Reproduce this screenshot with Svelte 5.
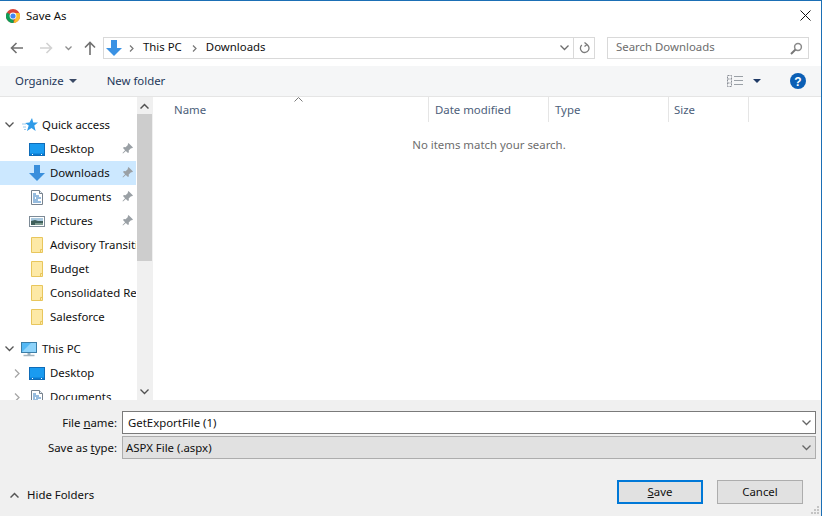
<script>
  const quick = [
    { name: 'Desktop', icon: 'desktop', pin: true },
    { name: 'Downloads', icon: 'down', pin: true, sel: true },
    { name: 'Documents', icon: 'doc', pin: true },
    { name: 'Pictures', icon: 'pic', pin: true },
    { name: 'Advisory Transitions', icon: 'folder' },
    { name: 'Budget', icon: 'folder' },
    { name: 'Consolidated Reports', icon: 'folder' },
    { name: 'Salesforce', icon: 'folder' }
  ];
  const pc = [
    { name: 'Desktop', icon: 'desktop' },
    { name: 'Documents', icon: 'doc' }
  ];
</script>

{#snippet icon(kind)}
  <span class="ibox">
  {#if kind === 'desktop'}
    <svg width="16" height="13" viewBox="0 0 16 13"><rect x="0.500" y="0.500" width="15" height="12" fill="#1a9bf0" stroke="#0f6cb8"/><path d="M1 10.500h14V12H1z" fill="#0a7ad0"/><path d="M3 11.500h1M12 11.500h1" stroke="#fff"/></svg>
  {:else if kind === 'down'}
    <svg width="16" height="16" viewBox="0 0 16 16"><path d="M5 0h6v8h5l-8 8-8-8h5z" fill="#3a8fdc"/></svg>
  {:else if kind === 'doc'}
    <svg width="12" height="15" viewBox="0 0 12 15"><path d="M0.500 0.500h8l3 3v11H.5z" fill="#fff" stroke="#77828e"/><path d="M8.500 0.500v3h3" fill="#e8eef4" stroke="#77828e"/><path d="M2 4h3M2 6h6M2 8h2M5 8h5M2 10h5M2 12h8" stroke="#2f78bd"/></svg>
  {:else if kind === 'pic'}
    <svg width="16" height="11" viewBox="0 0 16 11"><rect x="0.500" y="0.500" width="15" height="10" fill="#fff" stroke="#7d8a96"/><rect x="2" y="2" width="12" height="3" fill="#a9c8de"/><path d="M2 5l4-1 3 1 5 0v4H2z" fill="#3f5f5a"/><path d="M6 7h8v2H6z" fill="#7c9a8f"/></svg>
  {:else}
    <svg width="12" height="16" viewBox="0 0 12 16"><path d="M0.500 0.500h11v15H.5z" fill="#fde9a6" stroke="#e8c65c"/><path d="M9.500 15.500v-3h2" fill="none" stroke="#e8c65c"/></svg>
  {/if}
  </span>
{/snippet}

{#snippet pin()}
  <svg class="pin" width="11" height="11" viewBox="0 0 11 11"><path d="M6.500 0l4.500 4.500-1 .8-1-.1-2.300 2.300.2 1.700-.9.900-2.200-2.200L1 10.500 0.500 10l2.600-2.800L1 5l.9-.9 1.700.2L5.900 2 5.800 1z" fill="#9aa0a5"/></svg>
{/snippet}

{#snippet chevDown(color)}
  <svg width="9" height="6" viewBox="0 0 9 6"><path d="M0.500 0.500l4 4 4-4" fill="none" stroke={color} stroke-width="1.300"/></svg>
{/snippet}

<div class="win">
  <header class="title">
    <svg width="14" height="14" viewBox="0 0 14 14">
      <circle cx="7" cy="7" r="7" fill="#db4437"/>
      <path d="M7 7L7.800 14A7 7 0 0 1 0.900 3.600z" fill="#0f9d58"/>
      <path d="M7 4h6.400A7 7 0 0 1 7.500 14L10 8z" fill="#fbc02d"/>
      <circle cx="7" cy="7" r="3.400" fill="#fff"/>
      <circle cx="7" cy="7" r="2.600" fill="#4285f4"/>
    </svg>
    <span>Save As</span>
    <svg class="close" width="11" height="11" viewBox="0 0 11 11"><path d="M0.500 0.500l10 10M10.500 0.500l-10 10" stroke="#111" stroke-width="1"/></svg>
  </header>

  <nav class="nav">
    <svg class="nb" width="14" height="12" viewBox="0 0 14 12"><path d="M13 6H2M6.500 1L1.500 6l5 5" fill="none" stroke="#707070" stroke-width="1.600"/></svg>
    <svg class="nb fwd" width="14" height="12" viewBox="0 0 14 12"><path d="M1 6h11M7.500 1l5 5-5 5" fill="none" stroke="#d2d2d2" stroke-width="1.600"/></svg>
    <svg class="nb hist" width="7" height="5" viewBox="0 0 7 5"><path d="M0.500 0.500l3 3 3-3" fill="none" stroke="#8d8d8d" stroke-width="1.300"/></svg>
    <svg class="nb up" width="12" height="14" viewBox="0 0 12 14"><path d="M6 14V2M1 6.500l5-5 5 5" fill="none" stroke="#707070" stroke-width="1.600"/></svg>
    <div class="addr">
      <svg width="16" height="16" viewBox="0 0 16 16"><path d="M5 0h6v8h5l-8 8-8-8h5z" fill="#3a92e4"/></svg>
      <svg class="crumb first" width="5" height="7" viewBox="0 0 5 7"><path d="M1 0.500l3 3-3 3" fill="none" stroke="#777" stroke-width="1.200"/></svg>
      <span class="path">This PC</span>
      <svg class="crumb" width="5" height="7" viewBox="0 0 5 7"><path d="M1 0.500l3 3-3 3" fill="none" stroke="#777" stroke-width="1.200"/></svg>
      <span class="path">Downloads</span>
      <span class="drop">{@render chevDown('#6d6d6d')}</span>
      <span class="refresh">
        <svg width="11" height="12" viewBox="0 0 11 12"><path d="M7.500 2.300A4.300 4.300 0 1 1 2.800 3M5.500 0.500L8 2.500 5.500 4.500" fill="none" stroke="#7b7b7b" stroke-width="1.300"/></svg>
      </span>
    </div>
    <div class="search">
      <span class="stext">Search Downloads</span>
      <svg width="13" height="13" viewBox="0 0 13 13"><circle cx="8" cy="5" r="3.400" fill="none" stroke="#8a8a8a" stroke-width="1.500"/><path d="M5.500 7.500L1 12" stroke="#777" stroke-width="2"/></svg>
    </div>
  </nav>

  <div class="tools">
    <span class="org">Organize</span>
    <svg class="caret" width="8" height="4" viewBox="0 0 8 4"><path d="M0 0h8L4 4z" fill="#3b4a66"/></svg>
    <span class="newf">New folder</span>
    <svg class="views" width="16" height="12" viewBox="0 0 16 12"><path d="M0.500 0.500h4v11h-4zM0.500 4h4M0.500 8h4" fill="none" stroke="#8a8f96" stroke-dasharray="2 1"/><path d="M7 1.500h9M7 5.500h9M7 9.500h9" stroke="#9aa0a6"/></svg>
    <svg class="caret2" width="8" height="4" viewBox="0 0 8 4"><path d="M0 0h8L4 4z" fill="#1f3a66"/></svg>
    <svg class="help" width="16" height="16" viewBox="0 0 16 16"><circle cx="8" cy="8" r="8" fill="#0b5fb5"/><text x="8" y="12.500" text-anchor="middle" class="q">?</text></svg>
  </div>

  <main class="main">
    <aside class="tree">
      <div class="rows">
        <div class="row head">
          <span class="tw">{@render chevDown('#555')}</span>
          <svg class="star" width="16" height="14" viewBox="0 0 16 14"><path d="M10 0l1.300 4.500H16l-3.700 2.900 1.300 5.600-4.100-3L5 13l1.700-5.400L3 5l4.500-.4z" fill="#2f9be8"/><path d="M0 6h4M1 9h3M2 11.500h2" stroke="#9ccbee"/></svg>
          <span class="lbl">Quick access</span>
        </div>
        {#each quick as item}
          <div class="row item" class:sel={item.sel}>
            {@render icon(item.icon)}
            <span class="lbl">{item.name}</span>
            {#if item.pin}{@render pin()}{/if}
          </div>
        {/each}
        <div class="row head pcrow">
          <span class="tw">{@render chevDown('#555')}</span>
          <svg class="pcico" width="16" height="15" viewBox="0 0 16 15"><rect x="0.500" y="0.500" width="15" height="10" fill="#53b8f5" stroke="#3b7ea8"/><path d="M1 10l9-9h5v9z" fill="#8ed3fa"/><path d="M6.500 11h3v2h-3z" fill="#9bb0bd"/><path d="M2.500 13.500h11" stroke="#a6b5bf" stroke-width="1.500"/></svg>
          <span class="lbl">This PC</span>
        </div>
        {#each pc as item}
          <div class="row item sub">
            <svg class="tw2" width="6" height="9" viewBox="0 0 6 9"><path d="M1 0.500l4 4-4 4" fill="none" stroke="#a6a6a6" stroke-width="1.300"/></svg>
            {@render icon(item.icon)}
            <span class="lbl">{item.name}</span>
          </div>
        {/each}
      </div>
      <div class="sb">
        <div class="sbtn"><svg width="9" height="6" viewBox="0 0 9 6"><path d="M0.500 5.500l4-4 4 4" fill="none" stroke="#505050" stroke-width="1.500"/></svg></div>
        <div class="thumb"></div>
        <div class="track"></div>
        <div class="sbtn dn">{@render chevDown('#505050')}</div>
      </div>
    </aside>
    <section class="list">
      <div class="cols">
        <svg class="sort" width="9" height="5" viewBox="0 0 9 5"><path d="M0.500 4.500l4-4 4 4" fill="none" stroke="#7a7a7a"/></svg>
        <div class="col c1">Name</div>
        <div class="col c2">Date modified</div>
        <div class="col c3">Type</div>
        <div class="col c4">Size</div>
      </div>
      <p class="empty">No items match your search.</p>
    </section>
  </main>

  <footer class="foot">
    <div class="field name">
      <label for="fn">File <u>n</u>ame:</label>
      <div class="inp"><input id="fn" value="GetExportFile (1)" />{@render chevDown('#666')}</div>
    </div>
    <div class="field type">
      <span class="flabel">Save as <u>t</u>ype:</span>
      <div class="inp ro"><span>ASPX File (.aspx)</span>{@render chevDown('#666')}</div>
    </div>
    <div class="actions">
      <div class="hide">
        <svg width="9" height="6" viewBox="0 0 9 6"><path d="M0.500 5.500l4-4 4 4" fill="none" stroke="#555" stroke-width="1.500"/></svg>
        <span>Hide Folders</span>
      </div>
      <button class="btn primary"><u>S</u>ave</button>
      <button class="btn">Cancel</button>
    </div>
    <svg class="grip" width="8" height="8" viewBox="0 0 8 8"><path d="M6 0h2v2H6zM3 3h2v2H3zM6 3h2v2H6zM0 6h2v2H0zM3 6h2v2H3zM6 6h2v2H6z" fill="#c4c4c4"/></svg>
  </footer>
</div>

<style>
  :global(body) { margin: 0; }
  .win {
    width: 822px; height: 516px; box-sizing: border-box; overflow: hidden;
    border-top: 1px solid #1b6fb5; border-right: 1px solid #1b6fb5;
    background: #fff; display: flex; flex-direction: column; position: relative;
    font: 11.4px/16px "Noto Sans", "Open Sans", sans-serif; color: #0f0f0f;
  }
  .title { height: 29px; display: flex; align-items: center; padding: 0 0 0 6px; gap: 6px; flex: none; }
  .title span { color: #111; }
  .close { margin-left: auto; margin-right: 10px; }

  .nav { height: 36px; flex: none; display: flex; align-items: center; padding-left: 10px; }
  .nb { flex: none; }
  .fwd { margin-left: 15px; }
  .hist { margin-left: 12px; }
  .up { margin-left: 12px; }
  .addr {
    margin-left: 7px; width: 492px; height: 22px; box-sizing: border-box; border: 1px solid #d9d9d9;
    display: flex; align-items: center; padding-left: 2px; flex: none;
  }
  .crumb { margin: 0 9px 0 10px; flex: none; }
  .crumb.first { margin-left: 7px; margin-right: 9px; }
  .path { color: #0f0f0f; margin-bottom: 2px; }
  .drop { margin-left: auto; display: flex; padding-right: 4px; }
  .refresh { width: 20px; height: 20px; border-left: 1px solid #d9d9d9; display: flex; align-items: center; justify-content: center; }
  .search {
    margin-left: 12px; width: 202px; height: 22px; box-sizing: border-box; border: 1px solid #d9d9d9;
    display: flex; align-items: center; justify-content: space-between; padding: 0 5px 0 8px; color: #6d6d6d; flex: none;
  }
  .stext { margin-bottom: 2px; }

  .tools {
    height: 30px; flex: none; background: #f5f6f7; border-bottom: 1px solid #e5e5e5; display: flex; align-items: center;
    padding-left: 15px; color: #1e395b;
  }
  .caret { margin-left: 5px; }
  .newf { margin-left: 30px; }
  .views { margin-left: auto; }
  .caret2 { margin-left: 10px; }
  .help { margin-left: 29px; margin-right: 15px; }
  .q { font: bold 12px "Liberation Sans", sans-serif; fill: #fff; }

  .main { flex: none; height: 303px; display: flex; overflow: hidden; }
  .tree { width: 153px; flex: none; display: flex; border-right: 1px solid #f0f0f0; box-sizing: border-box; }
  .rows { width: 136px; flex: none; padding-top: 16px; overflow: hidden; margin-right: 1px; }
  .row { height: 24px; display: flex; align-items: center; white-space: nowrap; position: relative; overflow: hidden; }
  .head { padding-left: 5px; }
  .tw { display: flex; width: 9px; flex: none; }
  .star { margin-left: 8px; margin-right: 4px; flex: none; }
  .pcico { margin-left: 7px; margin-right: 5px; flex: none; }
  .pcrow { margin-top: 8px; }
  .item { padding-left: 29px; }
  .ibox { width: 16px; margin-right: 5px; flex: none; display: flex; justify-content: center; }
  .item.sub { padding-left: 14px; }
  .tw2 { margin-right: 9px; flex: none; }
  .sel { background: #cce8ff; }
  .pin { position: absolute; left: 122px; top: 6px; }
  .sb { width: 15px; flex: none; display: flex; flex-direction: column; background: #f0f0f0; }
  .sbtn { height: 17px; display: flex; align-items: center; justify-content: center; flex: none; }
  .thumb { height: 147px; background: #cdcdcd; flex: none; }
  .track { flex: 1; }

  .list { flex: 1; min-width: 0; }
  .cols { height: 25px; display: flex; position: relative; color: #4c607a; }
  .col { box-sizing: border-box; border-right: 1px solid #e5e5e5; padding-top: 5px; height: 25px; flex: none; }
  .c1 { width: 276px; padding-left: 21px; }
  .c2 { width: 120px; padding-left: 6px; }
  .c3 { width: 120px; padding-left: 6px; }
  .c4 { width: 80px; padding-left: 5px; }
  .sort { position: absolute; left: 141px; top: 0; }
  .empty { margin: 15px 0 0; text-align: center; color: #6d6d6d; width: 672px; }

  .foot { flex: 1; background: #f0f0f0; position: relative; padding-top: 11px; box-sizing: border-box; }
  .field { display: flex; align-items: center; height: 23px; margin-bottom: 2px; }
  .field label, .flabel { width: 117px; text-align: right; margin-right: 5px; flex: none; }
  .inp {
    width: 694px; height: 23px; box-sizing: border-box; border: 1px solid #7a7a7a; background: #fff;
    display: flex; align-items: center; padding: 0 4px 0 5px;
  }
  .inp input { flex: 1; border: 0; outline: 0; padding: 0; font: inherit; color: #111; background: transparent; }
  .inp.ro { background: #e1e1e1; border-color: #adadad; padding-left: 3px; }
  .inp.ro span { flex: 1; }
  .actions { display: flex; align-items: center; margin-top: 21px; height: 24px; padding: 0 18px 0 10px; }
  .hide { display: flex; align-items: center; gap: 8px; margin-top: 6px; }
  .btn {
    width: 86px; height: 24px; box-sizing: border-box; border: 1px solid #adadad; background: #e1e1e1;
    font: inherit; color: #111; padding: 0; margin-left: 14px; flex: none;
  }
  .primary { border: 2px solid #0078d7; margin-left: auto; }
  .grip { position: absolute; right: 2px; bottom: 2px; }
</style>
